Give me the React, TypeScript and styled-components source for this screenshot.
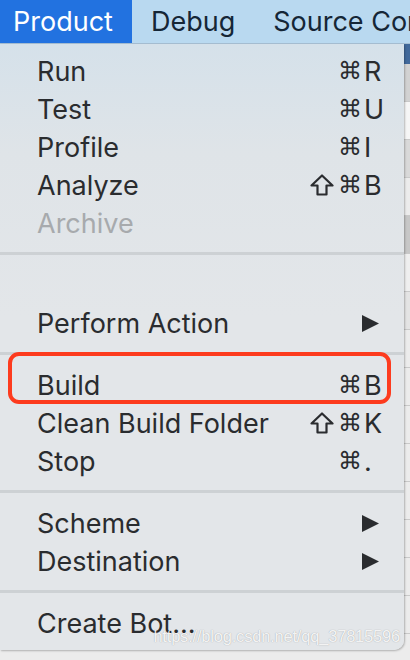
import * as React from 'react'
import styled, { createGlobalStyle } from 'styled-components'

const GlobalStyle = createGlobalStyle`
  html, body {
    margin: 0;
    padding: 0;
    background: #ececec;
  }
  body {
    font-family: Inter, "Liberation Sans", "DejaVu Sans", sans-serif;
    -webkit-font-smoothing: antialiased;
  }
`

const Screen = styled.div`
  position: relative;
  width: 410px;
  height: 660px;
  overflow: hidden;
  display: flex;
  flex-direction: column;
`

const MenuBar = styled.div`
  height: 43px;
  flex-shrink: 0;
  display: flex;
  align-items: stretch;
  background: #b9d9f0;
  border-bottom: 1px solid #a6bfd3;
`

const BarItem = styled.div<{ $active?: boolean }>`
  display: flex;
  align-items: center;
  padding: 0 19px 0 ${p => (p.$active ? '13px' : '19px')};
  font-size: 27px;
  color: ${p => (p.$active ? '#ffffff' : '#152636')};
  background: ${p => (p.$active ? '#2272e0' : 'transparent')};
  white-space: nowrap;
`

const Workspace = styled.div`
  flex: 1;
  display: flex;
  flex-direction: column;
  background: #f4f4f4;
`

const StripHeader = styled.div`
  height: 20px;
  flex-shrink: 0;
  background: #41699b;
`

const FileRow = styled.div<{ $tone?: string }>`
  height: 37px;
  flex-shrink: 0;
  border-bottom: 1px solid #c9c9c9;
  background: ${p => p.$tone || '#ececec'};
  display: flex;
  align-items: flex-end;
  font-size: 26px;
  color: #222;
  overflow: hidden;
  white-space: nowrap;
`

const FileName = styled.span`
  margin-left: -43px;
  transform: translateY(20px);
`

const Menu = styled.div`
  position: absolute;
  top: 44px;
  left: 0;
  width: 404px;
  height: 606px;
  box-sizing: border-box;
  padding: 8px 0;
  background: linear-gradient(180deg, #d5e1ea 0%, #dfe4e8 18%, #e3e6e9 45%, #e3e6e9 100%);
  border-bottom-right-radius: 10px;
  box-shadow: 1px 1px 2px rgba(0, 0, 0, 0.25);
  display: flex;
  flex-direction: column;
`

const Item = styled.div<{ $disabled?: boolean; $marked?: boolean }>`
  position: relative;
  height: 38px;
  flex-shrink: 0;
  display: flex;
  align-items: center;
  padding: 0 20px 0 37px;
  font-size: 27px;
  color: ${p => (p.$disabled ? '#a7aaad' : '#2a2c2f')};

  ${p =>
    p.$marked &&
    `
    &::after {
      content: '';
      position: absolute;
      left: 8px;
      right: 13px;
      top: -14px;
      bottom: 0;
      border: 4px solid #fd3b1e;
      border-radius: 11px;
    }
  `}
`

const Label = styled.span`
  flex: 1;
  white-space: nowrap;
`

const Shortcut = styled.span`
  display: flex;
  align-items: center;
  gap: 2px;
  white-space: nowrap;
`

const Command = styled.span`
  font-family: "DejaVu Sans", sans-serif;
  font-size: 24px;
`

const ShiftIcon = styled.svg`
  width: 24px;
  height: 22px;
  margin-right: 2px;
  fill: none;
  stroke: #2a2c2f;
  stroke-width: 2.2;
  stroke-linejoin: round;
`

const Key = styled.span`
  min-width: 20px;
`

const Arrow = styled.svg`
  width: 17px;
  height: 17px;
  margin-right: 5px;
  fill: #2a2c2f;
`

const Separator = styled.div`
  height: 3px;
  flex-shrink: 0;
  margin: 10px 0 11px;
  background: #cdd1d4;
`

const Spacer = styled.div`
  height: 38px;
  flex-shrink: 0;
`

const Watermark = styled.div`
  position: absolute;
  right: 10px;
  top: 627px;
  font-family: "Liberation Sans", Arial, sans-serif;
  font-size: 16.5px;
  color: rgba(255, 255, 255, 0.9);
  text-shadow: 0 0 1px rgba(0, 0, 0, 0.35);
  letter-spacing: -0.2px;
`

type Entry =
  | { kind: 'item'; label: string; shift?: boolean; keyChar?: string; submenu?: boolean; disabled?: boolean; marked?: boolean }
  | { kind: 'sep' }
  | { kind: 'blank' }

const entries: Entry[] = [
  { kind: 'item', label: 'Run', keyChar: 'R' },
  { kind: 'item', label: 'Test', keyChar: 'U' },
  { kind: 'item', label: 'Profile', keyChar: 'I' },
  { kind: 'item', label: 'Analyze', shift: true, keyChar: 'B' },
  { kind: 'item', label: 'Archive', disabled: true },
  { kind: 'sep' },
  { kind: 'blank' },
  { kind: 'item', label: 'Perform Action', submenu: true },
  { kind: 'sep' },
  { kind: 'item', label: 'Build', keyChar: 'B', marked: true },
  { kind: 'item', label: 'Clean Build Folder', shift: true, keyChar: 'K' },
  { kind: 'item', label: 'Stop', keyChar: '.' },
  { kind: 'sep' },
  { kind: 'item', label: 'Scheme', submenu: true },
  { kind: 'item', label: 'Destination', submenu: true },
  { kind: 'sep' },
  { kind: 'item', label: 'Create Bot...' },
]

const SubmenuArrow = () => (
  <Arrow viewBox="0 0 17 17">
    <path d="M0 0 L17 8.5 L0 17 Z" />
  </Arrow>
)

const Shift = () => (
  <ShiftIcon viewBox="0 0 24 22">
    <path d="M12 1.5 L22.5 11.5 H16.5 V20.5 H7.5 V11.5 H1.5 Z" />
  </ShiftIcon>
)

export default function App() {
  const tones = ['#d2d2d2', '#f6f6f6', '#d9d9d9', '#ececec', '#c7c7c7', '#efefef', '#e4e4e4']
  return (
    <>
      <GlobalStyle />
      <Screen>
        <MenuBar>
          <BarItem $active>Product</BarItem>
          <BarItem>Debug</BarItem>
          <BarItem>Source Control</BarItem>
        </MenuBar>

        <Workspace>
          <StripHeader />
          {tones.map((t, i) => (
            <FileRow key={i} $tone={t} />
          ))}
          {Array.from({ length: 8 }).map((_, i) => (
            <FileRow key={`r${i}`} />
          ))}
          <FileRow>
            <FileName>LaunchScreen.xib</FileName>
          </FileRow>
        </Workspace>

        <Menu>
          {entries.map((e, i) => {
            if (e.kind === 'sep') return <Separator key={i} />
            if (e.kind === 'blank') return <Spacer key={i} />
            return (
              <Item key={i} $disabled={e.disabled} $marked={e.marked}>
                <Label>{e.label}</Label>
                {e.keyChar && (
                  <Shortcut>
                    {e.shift && <Shift />}
                    <Command>⌘</Command>
                    <Key>{e.keyChar}</Key>
                  </Shortcut>
                )}
                {e.submenu && <SubmenuArrow />}
              </Item>
            )
          })}
        </Menu>

        <Watermark>https://blog.csdn.net/qq_37815596</Watermark>
      </Screen>
    </>
  )
}
